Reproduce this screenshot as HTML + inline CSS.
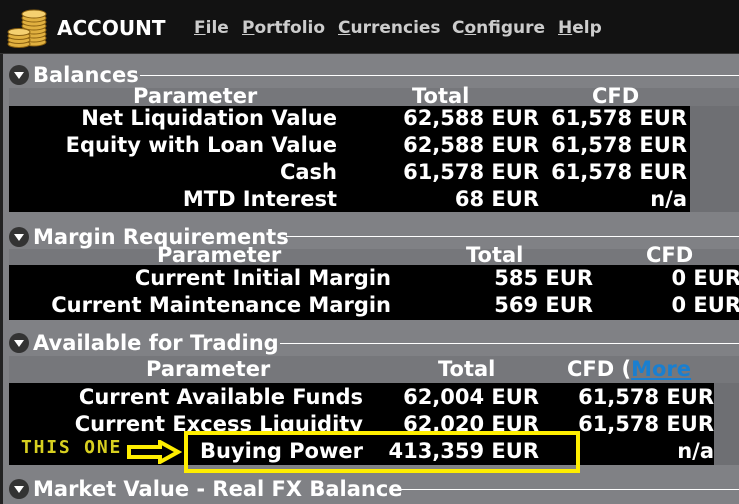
<!DOCTYPE html>
<html><head><meta charset="utf-8"><style>
*{margin:0;padding:0;box-sizing:border-box}
body{width:739px;height:504px;overflow:hidden;background:#808185;position:relative;font-family:"DejaVu Sans","Liberation Sans",sans-serif;font-weight:bold;color:#fff}
.a{position:absolute;white-space:nowrap}
.t{font-size:21px;line-height:27px}
.r{text-align:right}
.blk{position:absolute;background:#000}
.band{position:absolute;background:#76777b}
.sec{position:absolute;left:9px;font-size:21px;line-height:24px;display:flex;align-items:center}
.tri{width:20px;height:20px;border-radius:50%;background:#333;margin-right:4px;position:relative}
.tri:after{content:"";position:absolute;left:5px;top:7px;border-left:5px solid transparent;border-right:5px solid transparent;border-top:7px solid #fff}
.line{position:absolute;height:1px;background:#fff;right:0}
.menu{font-size:17px;color:#ccc;top:18px}
.menu u{text-decoration:underline}
</style></head><body>
<div class="a" style="left:0;top:0;width:739px;height:54px;background:#121212;border-bottom:1px solid #333"></div>
<div class="a" style="left:0;top:54px;width:3px;height:450px;background:#222"></div>
<svg class="a" style="left:4px;top:8px" width="46" height="40" viewBox="0 0 46 40">
<g fill="#e0b040" stroke="#8a6010" stroke-width="1">
<ellipse cx="30" cy="34" rx="12" ry="4"/><ellipse cx="30" cy="30" rx="12" ry="4"/><ellipse cx="30" cy="26" rx="12" ry="4"/><ellipse cx="30" cy="22" rx="12" ry="4"/><ellipse cx="30" cy="18" rx="12" ry="4"/><ellipse cx="30" cy="14" rx="12" ry="4"/><ellipse cx="30" cy="10" rx="12" ry="4"/><ellipse cx="30" cy="6" rx="12" ry="4" fill="#f5d070"/>
<ellipse cx="15" cy="36" rx="11" ry="3.5"/><ellipse cx="15" cy="32" rx="11" ry="3.5"/><ellipse cx="15" cy="28" rx="11" ry="3.5"/><ellipse cx="15" cy="24" rx="11" ry="3.5" fill="#f5d070"/>
</g></svg>
<div class="a" style="left:57px;top:16px;font-size:20px">ACCOUNT</div>
<div class="a menu" style="left:194px"><u>F</u>ile</div>
<div class="a menu" style="left:242px"><u>P</u>ortfolio</div>
<div class="a menu" style="left:338px"><u>C</u>urrencies</div>
<div class="a menu" style="left:452px">C<u>o</u>nfigure</div>
<div class="a menu" style="left:558px"><u>H</u>elp</div>

<div class="sec" style="top:63px"><div class="tri"></div>Balances</div>
<div class="line" style="left:140px;top:75px"></div>
<div class="band" style="left:9px;top:88px;width:730px;height:18px"></div>
<div class="a" style="left:690px;top:106px;width:49px;height:106px;background:#6e6f73"></div>
<div class="a t" style="left:133px;top:83px">Parameter</div>
<div class="a t" style="left:412px;top:83px">Total</div>
<div class="a t" style="left:592px;top:83px">CFD</div>
<div class="blk" style="left:9px;top:106px;width:681px;height:106px"></div>
<div class="a t r" style="right:402px;top:105px">Net Liquidation Value</div>
<div class="a t r" style="right:402px;top:132px">Equity with Loan Value</div>
<div class="a t r" style="right:402px;top:159px">Cash</div>
<div class="a t r" style="right:402px;top:186px">MTD Interest</div>
<div class="a t r" style="right:200px;top:105px">62,588 EUR</div>
<div class="a t r" style="right:200px;top:132px">62,588 EUR</div>
<div class="a t r" style="right:200px;top:159px">61,578 EUR</div>
<div class="a t r" style="right:200px;top:186px">68 EUR</div>
<div class="a t r" style="right:52px;top:105px">61,578 EUR</div>
<div class="a t r" style="right:52px;top:132px">61,578 EUR</div>
<div class="a t r" style="right:52px;top:159px">61,578 EUR</div>
<div class="a t r" style="right:52px;top:186px">n/a</div>

<div class="sec" style="top:225px"><div class="tri"></div>Margin Requirements</div>
<div class="line" style="left:286px;top:236px"></div>
<div class="band" style="left:9px;top:249px;width:730px;height:16px"></div>
<div class="a t" style="left:157px;top:242px">Parameter</div>
<div class="a t" style="left:466px;top:242px">Total</div>
<div class="a t" style="left:646px;top:242px">CFD</div>
<div class="blk" style="left:9px;top:265px;width:730px;height:55px"></div>
<div class="a t r" style="right:348px;top:265px">Current Initial Margin</div>
<div class="a t r" style="right:348px;top:292px">Current Maintenance Margin</div>
<div class="a t r" style="right:146px;top:265px">585 EUR</div>
<div class="a t r" style="right:146px;top:292px">569 EUR</div>
<div class="a t r" style="right:-2px;top:265px">0 EUR</div>
<div class="a t r" style="right:-2px;top:292px">0 EUR</div>

<div class="sec" style="top:331px"><div class="tri"></div>Available for Trading</div>
<div class="line" style="left:280px;top:343px"></div>
<div class="band" style="left:9px;top:356px;width:730px;height:27px"></div>
<div class="a" style="left:714px;top:383px;width:25px;height:82px;background:#6e6f73"></div>
<div class="a t" style="left:146px;top:356px">Parameter</div>
<div class="a t" style="left:438px;top:356px">Total</div>
<div class="a t" style="left:567px;top:356px">CFD (<span style="color:#1a7fd0;text-decoration:underline">More</span></div>
<div class="blk" style="left:9px;top:383px;width:705px;height:82px"></div>
<div class="a t r" style="right:376px;top:384px">Current Available Funds</div>
<div class="a t r" style="right:376px;top:411px">Current Excess Liquidity</div>
<div class="a t r" style="right:376px;top:438px">Buying Power</div>
<div class="a t r" style="right:200px;top:384px">62,004 EUR</div>
<div class="a t r" style="right:200px;top:411px">62,020 EUR</div>
<div class="a t r" style="right:200px;top:438px">413,359 EUR</div>
<div class="a t r" style="right:25px;top:384px">61,578 EUR</div>
<div class="a t r" style="right:25px;top:411px">61,578 EUR</div>
<div class="a t r" style="right:25px;top:438px">n/a</div>
<div class="a" style="left:184px;top:431px;width:396px;height:42px;border:4px solid #ffee00"></div>
<div class="a" style="top:435px;height:5px;background:#000;left:188px;width:388px"></div>
<div class="a" style="left:21px;top:437px;font-size:18px;color:#d8d020;font-family:'DejaVu Sans Mono','Liberation Mono',monospace;font-weight:bold;letter-spacing:1.8px">THIS ONE</div>
<svg class="a" style="left:126px;top:440px" width="56" height="24" viewBox="0 0 56 24"><path d="M3 7 H34 V2 L52 12 L34 22 V17 H3 Z" fill="none" stroke="#ffee00" stroke-width="4"/></svg>

<div class="sec" style="top:477px"><div class="tri"></div>Market Value - Real FX Balance</div>
<div class="line" style="left:400px;top:489px"></div>
</body></html>
